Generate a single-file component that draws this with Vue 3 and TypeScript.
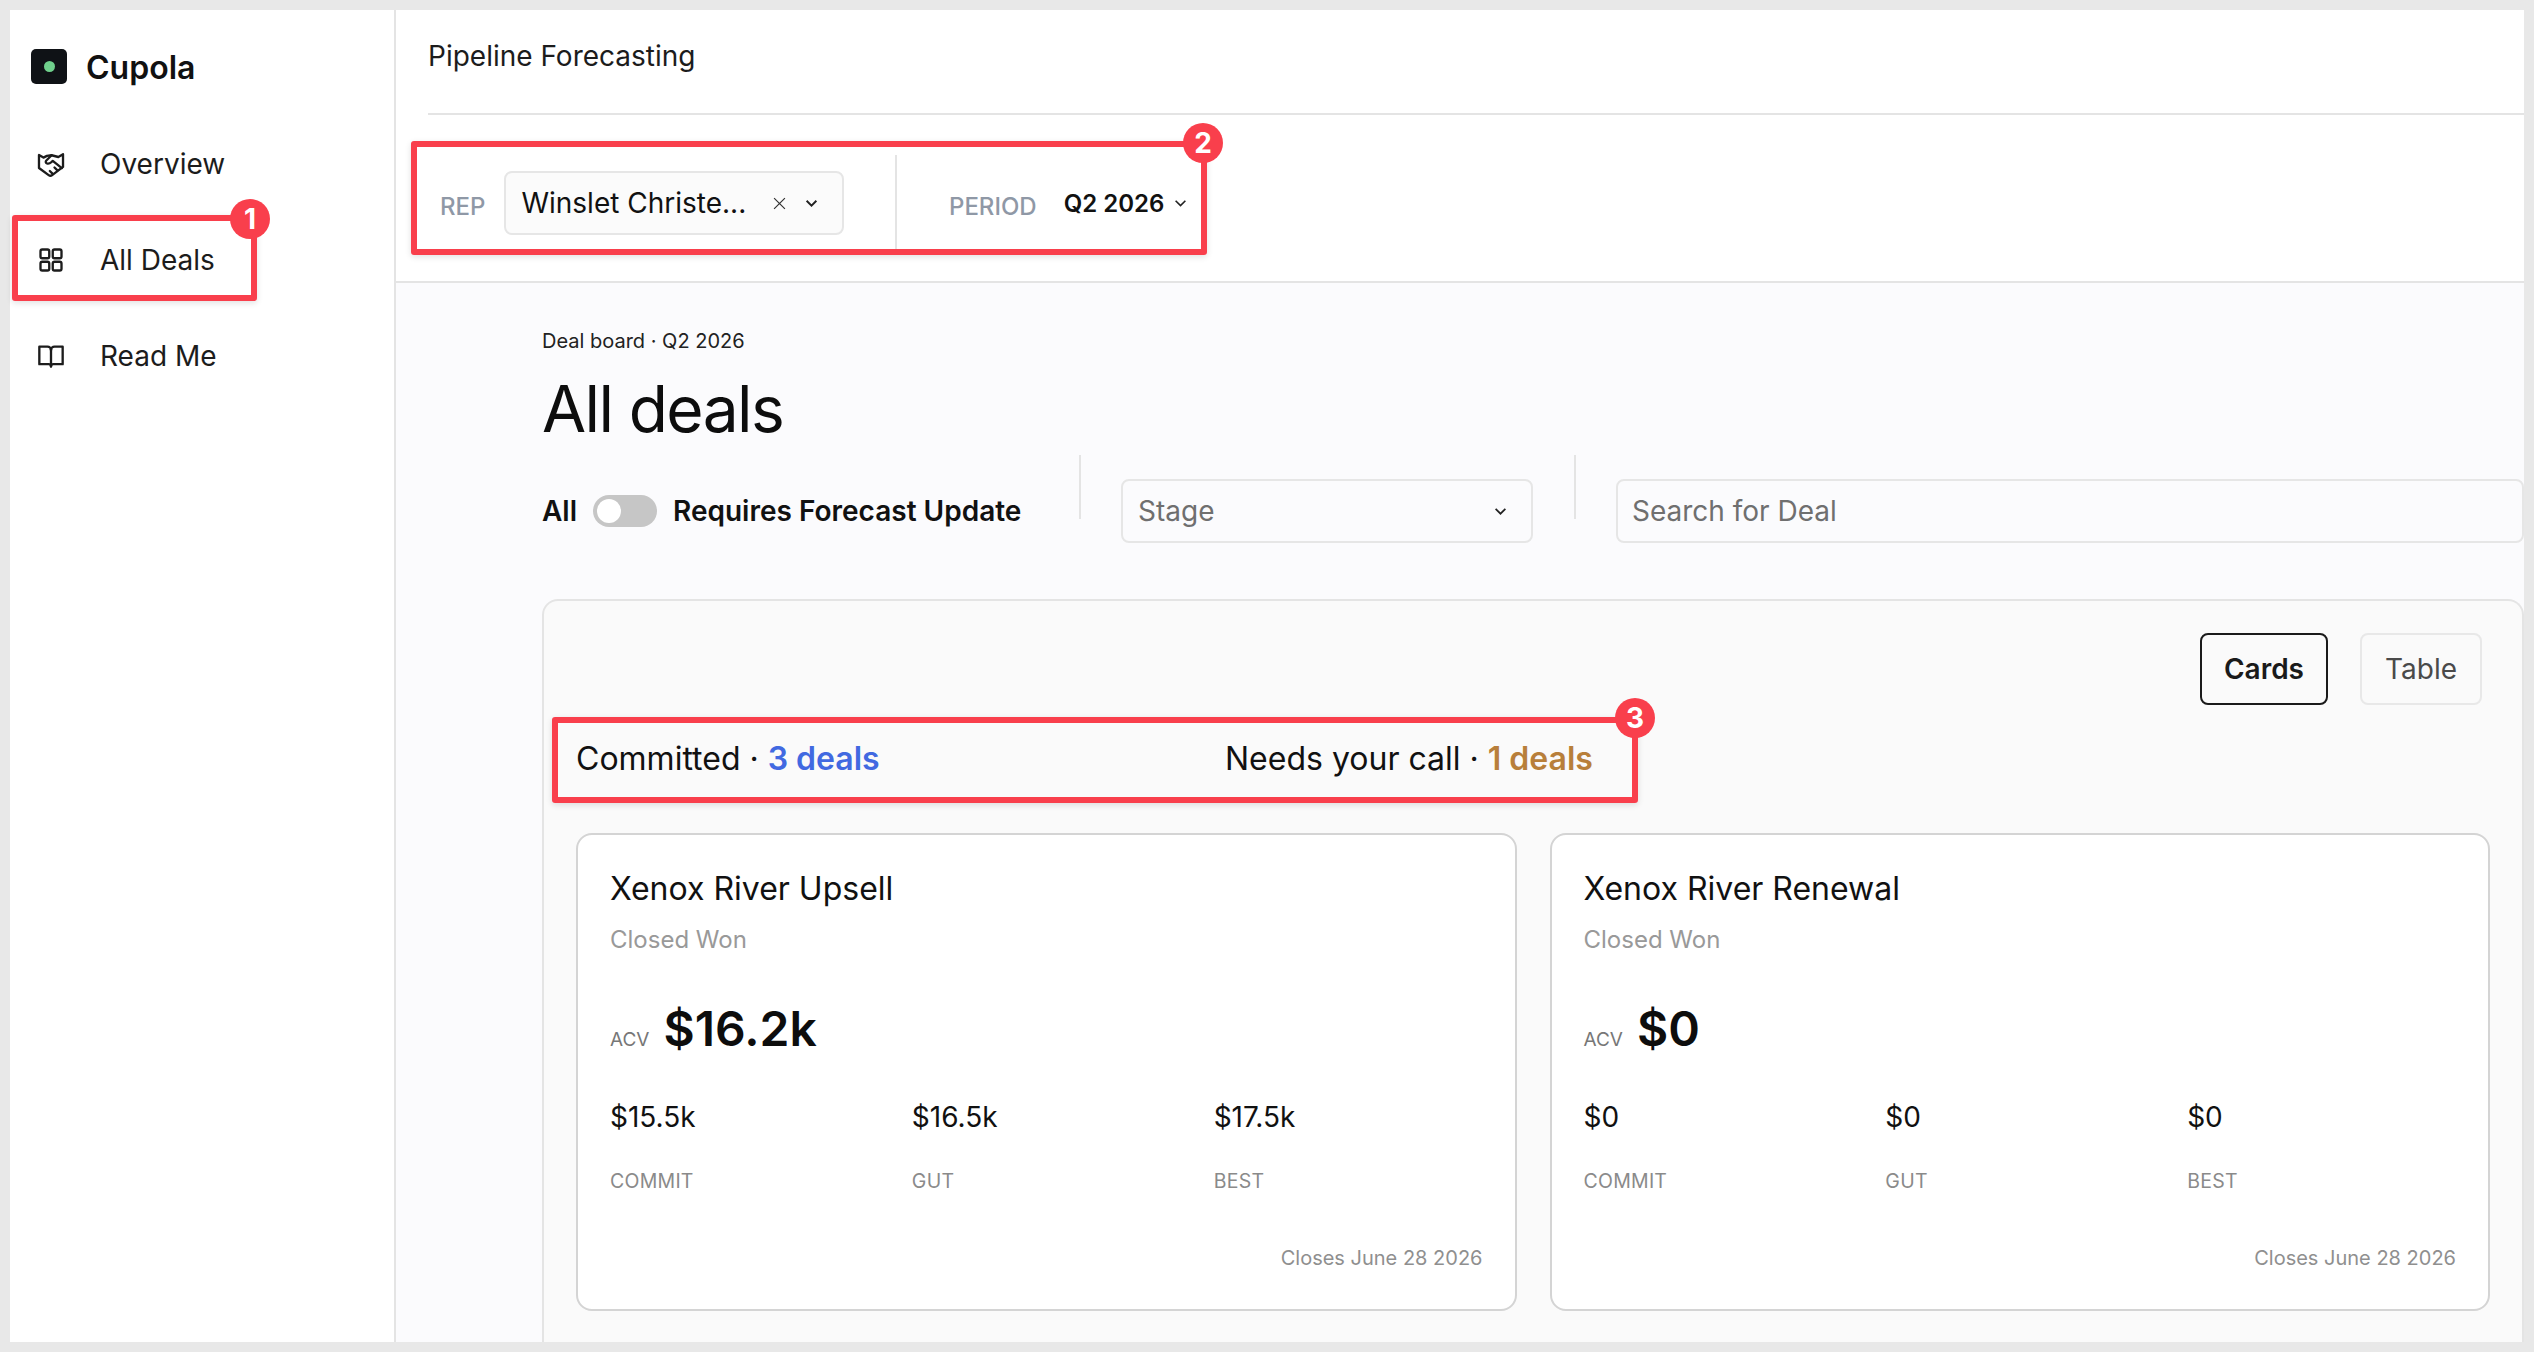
<script setup lang="ts">
interface Deal {
  name: string;
  stage: string;
  acv: string;
  commit: string;
  gut: string;
  best: string;
  closes: string;
}

const deals: Deal[] = [
  { name: 'Xenox River Upsell', stage: 'Closed Won', acv: '$16.2k', commit: '$15.5k', gut: '$16.5k', best: '$17.5k', closes: 'Closes June 28 2026' },
  { name: 'Xenox River Renewal', stage: 'Closed Won', acv: '$0', commit: '$0', gut: '$0', best: '$0', closes: 'Closes June 28 2026' },
];
</script>

<template>
  <div class="page">
    <div class="window">
      <aside class="sidebar">
        <div class="brand">
          <span class="logo"><span class="logo-dot"></span></span>
          <span class="brand-name">Cupola</span>
        </div>
        <nav class="nav">
          <a class="nav-item">
            <svg class="nav-icon" viewBox="0 0 24 24" fill="none" stroke="currentColor" stroke-width="2" stroke-linecap="round" stroke-linejoin="round">
              <path d="M12.500 4.500 8.500 5 5.500 6.500 1.700 4.300V15.400L10 21.500c1 .8 2 .8 3 0l9.300-7V3.600L18.300 6l-5.800-1.500" />
              <path d="M12.500 4.500 8 9c-.9.9-.5 2.200.5 2.500 1.300.3 2.700-.1 3.700-1l1.300-1.200 7.800 6.200" />
              <path d="m17.500 17.500-2.500-2.500M13.500 20.500l-2.500-2.500" />
            </svg>
            <span>Overview</span>
          </a>
          <a class="nav-item">
            <svg class="nav-icon" viewBox="0 0 24 24" fill="none" stroke="currentColor" stroke-width="2" stroke-linecap="round" stroke-linejoin="round">
              <rect x="3" y="3" width="7.500" height="7.500" rx="1.500" />
              <rect x="13.500" y="3" width="7.500" height="7.500" rx="1.500" />
              <rect x="3" y="13.500" width="7.500" height="7.500" rx="1.500" />
              <rect x="13.500" y="13.500" width="7.500" height="7.500" rx="1.500" />
            </svg>
            <span>All Deals</span>
          </a>
          <a class="nav-item">
            <svg class="nav-icon" viewBox="0 0 24 24" fill="none" stroke="currentColor" stroke-width="2" stroke-linecap="round" stroke-linejoin="round">
              <path d="M12 6.500V21" />
              <path d="M2 4h7a3 3 0 0 1 3 3 3 3 0 0 1 3-3h7v15h-8a2 2 0 0 0-2 2 2 2 0 0 0-2-2H2z" />
            </svg>
            <span>Read Me</span>
          </a>
        </nav>
      </aside>

      <div class="main">
        <header class="header">
          <div class="header-title">Pipeline Forecasting</div>
          <div class="filters">
            <div class="filter-rep">
              <span class="filter-label">REP</span>
              <div class="rep-select">
                <span class="rep-name">Winslet Christe...</span>
                <svg class="rep-clear" viewBox="0 0 12 12" fill="none" stroke="currentColor" stroke-width="1.100"><path d="M1 1l10 10M11 1 1 11" /></svg>
                <svg class="chev" viewBox="0 0 12 8" fill="none" stroke="currentColor" stroke-width="1.800"><path d="M1.500 1.500 6 6l4.500-4.500" /></svg>
              </div>
            </div>
            <div class="filter-period">
              <span class="filter-label">PERIOD</span>
              <span class="period-value">Q2 2026</span>
              <svg class="chev" viewBox="0 0 12 8" fill="none" stroke="currentColor" stroke-width="1.500"><path d="M1.500 1.500 6 6l4.500-4.500" /></svg>
            </div>
          </div>
        </header>

        <main class="content">
          <div class="eyebrow">Deal board · Q2 2026</div>
          <h1 class="title">All deals</h1>

          <div class="controls">
            <div class="toggle-group">
              <span>All</span>
              <span class="toggle"><span class="toggle-knob"></span></span>
              <span>Requires Forecast Update</span>
            </div>
            <div class="control-cell">
              <span class="divider"></span>
              <div class="stage-select">
                <span>Stage</span>
                <svg class="chev" viewBox="0 0 12 8" fill="none" stroke="currentColor" stroke-width="1.600"><path d="M1.500 1.500 6 6l4.500-4.500" /></svg>
              </div>
            </div>
            <div class="control-cell control-search">
              <span class="divider"></span>
              <div class="search">Search for Deal</div>
            </div>
          </div>

          <section class="panel">
            <div class="view-switch">
              <button class="view-btn active">Cards</button>
              <button class="view-btn">Table</button>
            </div>
            <div class="summary">
              <div class="summary-item">Committed · <strong class="blue">3 deals</strong></div>
              <div class="summary-item">Needs your call · <strong class="amber">1 deals</strong></div>
            </div>
            <div class="cards">
              <article v-for="deal in deals" :key="deal.name" class="card">
                <h3 class="card-name">{{ deal.name }}</h3>
                <div class="card-stage">{{ deal.stage }}</div>
                <div class="card-acv"><span class="acv-label">ACV</span><span class="acv-value">{{ deal.acv }}</span></div>
                <div class="metrics">
                  <div><div class="metric-value">{{ deal.commit }}</div><div class="metric-label">COMMIT</div></div>
                  <div><div class="metric-value">{{ deal.gut }}</div><div class="metric-label">GUT</div></div>
                  <div><div class="metric-value">{{ deal.best }}</div><div class="metric-label">BEST</div></div>
                </div>
                <div class="card-closes">{{ deal.closes }}</div>
              </article>
            </div>
          </section>
        </main>
      </div>
    </div>

    <!-- callouts laid over the screenshot -->
    <div class="callout callout-1"><span class="badge">1</span></div>
    <div class="callout callout-2"><span class="badge">2</span></div>
    <div class="callout callout-3"><span class="badge">3</span></div>
  </div>
</template>

<style>
html,
body {
  margin: 0;
  background: #e8e8e8;
}
</style>

<style scoped>
.page {
  position: relative;
  width: 2534px;
  height: 1352px;
  padding: 10px;
  box-sizing: border-box;
  overflow: hidden;
  background: #e8e8e8;
  font-family: Inter, "Liberation Sans", sans-serif;
  color: #111;
}
.window {
  display: flex;
  height: 100%;
  background: #fff;
  overflow: hidden;
}

.sidebar {
  width: 386px;
  flex: none;
  box-sizing: border-box;
  border-right: 2px solid #e4e4e4;
  padding: 38px 0 0 21px;
}
.brand {
  display: flex;
  align-items: center;
  gap: 19px;
  height: 36px;
}
.logo {
  width: 36px;
  height: 35px;
  background: #0f1216;
  border-radius: 5px;
  display: flex;
  align-items: center;
  justify-content: center;
}
.logo-dot {
  width: 11px;
  height: 11px;
  border-radius: 50%;
  background: #6fd08c;
}
.brand-name {
  font-size: 32px;
  font-weight: 600;
  color: #111;
  padding-top: 2px;
}
.nav {
  margin-top: 60px;
  display: flex;
  flex-direction: column;
  gap: 56px;
}
.nav-item {
  display: flex;
  align-items: center;
  height: 40px;
  font-size: 28px;
  color: #1c1c1c;
}
.nav-icon {
  width: 28px;
  height: 28px;
  margin-left: 6px;
  margin-right: 35px;
  flex: none;
  color: #1c1c1c;
}

.main {
  flex: 1;
  min-width: 0;
  display: flex;
  flex-direction: column;
  background: #fbfbfd;
}
.header {
  flex: none;
  background: #fff;
  border-bottom: 2px solid #e4e4e4;
  height: 273px;
  box-sizing: border-box;
  padding-left: 32px;
}
.header-title {
  height: 105px;
  box-sizing: border-box;
  padding-top: 29px;
  font-size: 28px;
  color: #1c1c1c;
  border-bottom: 2px solid #e4e4e4;
}
.filters {
  display: flex;
  height: 96px;
  margin: 40px 0 0 -15px;
}
.filter-rep {
  width: 484px;
  box-sizing: border-box;
  display: flex;
  align-items: center;
  padding-left: 27px;
  border-right: 2px solid #e4e4e4;
}
.filter-label {
  font-size: 24px;
  font-weight: 500;
  color: #8f98a6;
  margin-top: 6px;
}
.rep-select {
  margin-left: 19px;
  width: 340px;
  height: 64px;
  box-sizing: border-box;
  border: 2px solid #e6e6e6;
  border-radius: 8px;
  background: #fbfbfb;
  display: flex;
  align-items: center;
  padding: 0 24px 0 15px;
  font-size: 28px;
}
.rep-name {
  flex: 1;
  white-space: nowrap;
}
.rep-clear {
  width: 13px;
  height: 13px;
  margin-right: 19px;
  color: #333;
}
.chev {
  width: 13px;
  height: 9px;
  color: #222;
  flex: none;
}
.filter-period {
  display: flex;
  align-items: center;
  padding-left: 52px;
}
.period-value {
  margin: 0 10px 0 27px;
  font-size: 24px;
  font-weight: 600;
}

.content {
  flex: 1;
  padding: 46px 0 0 146px;
}
.eyebrow {
  font-size: 20px;
  line-height: 24px;
  color: #222;
}
.title {
  margin: 17px 0 0;
  font-size: 64px;
  line-height: 78px;
  font-weight: 400;
  letter-spacing: -0.025em;
  color: #0d0d0d;
}
.controls {
  display: flex;
  margin-top: 7px;
  height: 88px;
}
.toggle-group {
  display: flex;
  align-items: center;
  align-self: flex-end;
  height: 64px;
  gap: 16px;
  width: 537px;
  flex: none;
  font-size: 28px;
  font-weight: 600;
}
.toggle {
  width: 64px;
  height: 32px;
  border-radius: 16px;
  background: #c6c6c6;
  display: flex;
  align-items: center;
  padding-left: 4px;
  box-sizing: border-box;
}
.toggle-knob {
  width: 24px;
  height: 24px;
  border-radius: 50%;
  background: #fff;
}
.control-cell {
  width: 495px;
  flex: none;
  display: flex;
  gap: 40px;
}
.control-search {
  flex: 1;
  width: auto;
}
.divider {
  width: 2px;
  height: 64px;
  background: #e4e4e4;
  flex: none;
}
.stage-select {
  margin-top: 24px;
  width: 412px;
  height: 64px;
  box-sizing: border-box;
  border: 2px solid #e6e6e6;
  border-radius: 8px;
  background: #fbfbfd;
  display: flex;
  align-items: center;
  justify-content: space-between;
  padding: 0 24px 0 15px;
  font-size: 28px;
  color: #6f6f6f;
}
.search {
  flex: 1;
  margin-top: 24px;
  height: 64px;
  box-sizing: border-box;
  border: 2px solid #e6e6e6;
  border-radius: 8px;
  display: flex;
  align-items: center;
  padding: 0 14px;
  font-size: 28px;
  color: #6f6f6f;
}

.panel {
  margin-top: 56px;
  background: #fafafa;
  border: 2px solid #e4e4e4;
  border-bottom: 0;
  border-radius: 16px 16px 0 0;
  padding: 32px 32px 0;
  height: 800px;
  box-sizing: border-box;
}
.view-switch {
  display: flex;
  justify-content: flex-end;
  gap: 32px;
  padding-right: 8px;
}
.view-btn {
  height: 72px;
  padding: 0 23px;
  font: 400 28px Inter, "Liberation Sans", sans-serif;
  color: #4a4a4a;
  background: #fafafa;
  border: 2px solid #e8e8e8;
  border-radius: 8px;
}
.view-btn.active {
  padding: 0 22px;
  border-color: #1a1a1a;
  font-weight: 600;
  color: #1a1a1a;
}
.summary {
  display: flex;
  margin-top: 29px;
  height: 48px;
  align-items: center;
  font-size: 32px;
  color: #111;
}
.summary-item {
  width: 649px;
  flex: none;
}
.summary strong {
  font-weight: 600;
}
.blue {
  color: #4169e1;
}
.amber {
  color: #b87f3a;
}
.cards {
  display: grid;
  grid-template-columns: 1fr 1fr;
  gap: 33px;
  margin-top: 51px;
}
.card {
  background: #fff;
  border: 2px solid #d4d4d4;
  border-radius: 16px;
  height: 478px;
  box-sizing: border-box;
  padding: 34px 32px 0;
  display: flex;
  flex-direction: column;
}
.card-name {
  margin: 0;
  font-size: 32px;
  line-height: 40px;
  font-weight: 400;
  color: #111;
}
.card-stage {
  margin-top: 16px;
  font-size: 24px;
  line-height: 30px;
  color: #999;
}
.card-acv {
  display: flex;
  align-items: baseline;
  gap: 14px;
  margin-top: 44px;
  height: 60px;
}
.acv-label {
  font-size: 19px;
  color: #777;
}
.acv-value {
  font-size: 48px;
  font-weight: 600;
  color: #0d0d0d;
}
.metrics {
  display: grid;
  grid-template-columns: repeat(3, 1fr);
  gap: 33px;
  margin-top: 41px;
}
.metric-value {
  font-size: 28px;
  line-height: 34px;
  color: #111;
}
.metric-label {
  margin-top: 35px;
  font-size: 19.500px;
  letter-spacing: 0.25px;
  line-height: 24px;
  color: #8a8a8a;
}
.card-closes {
  margin-top: 51px;
  text-align: right;
  font-size: 20px;
  line-height: 28px;
  color: #8f8f8f;
}

.callout {
  position: absolute;
  box-sizing: border-box;
  border: 6px solid #f93f4c;
  border-radius: 3px;
  box-shadow: 0 2px 6px rgba(0, 0, 0, 0.12);
}
.callout-1 {
  left: 12px;
  top: 215px;
  width: 245px;
  height: 86px;
}
.callout-2 {
  left: 411px;
  top: 141px;
  width: 796px;
  height: 114px;
}
.callout-3 {
  left: 552px;
  top: 717px;
  width: 1086px;
  height: 86px;
}
.badge {
  position: absolute;
  width: 40px;
  height: 40px;
  border-radius: 50%;
  background: #f93f4c;
  color: #fff;
  font-size: 28px;
  font-weight: 700;
  display: flex;
  align-items: center;
  justify-content: center;
}
.callout-1 .badge {
  top: -22px;
  right: -19px;
}
.callout-2 .badge {
  top: -24px;
  right: -22px;
}
.callout-3 .badge {
  top: -25px;
  right: -23px;
}
</style>
